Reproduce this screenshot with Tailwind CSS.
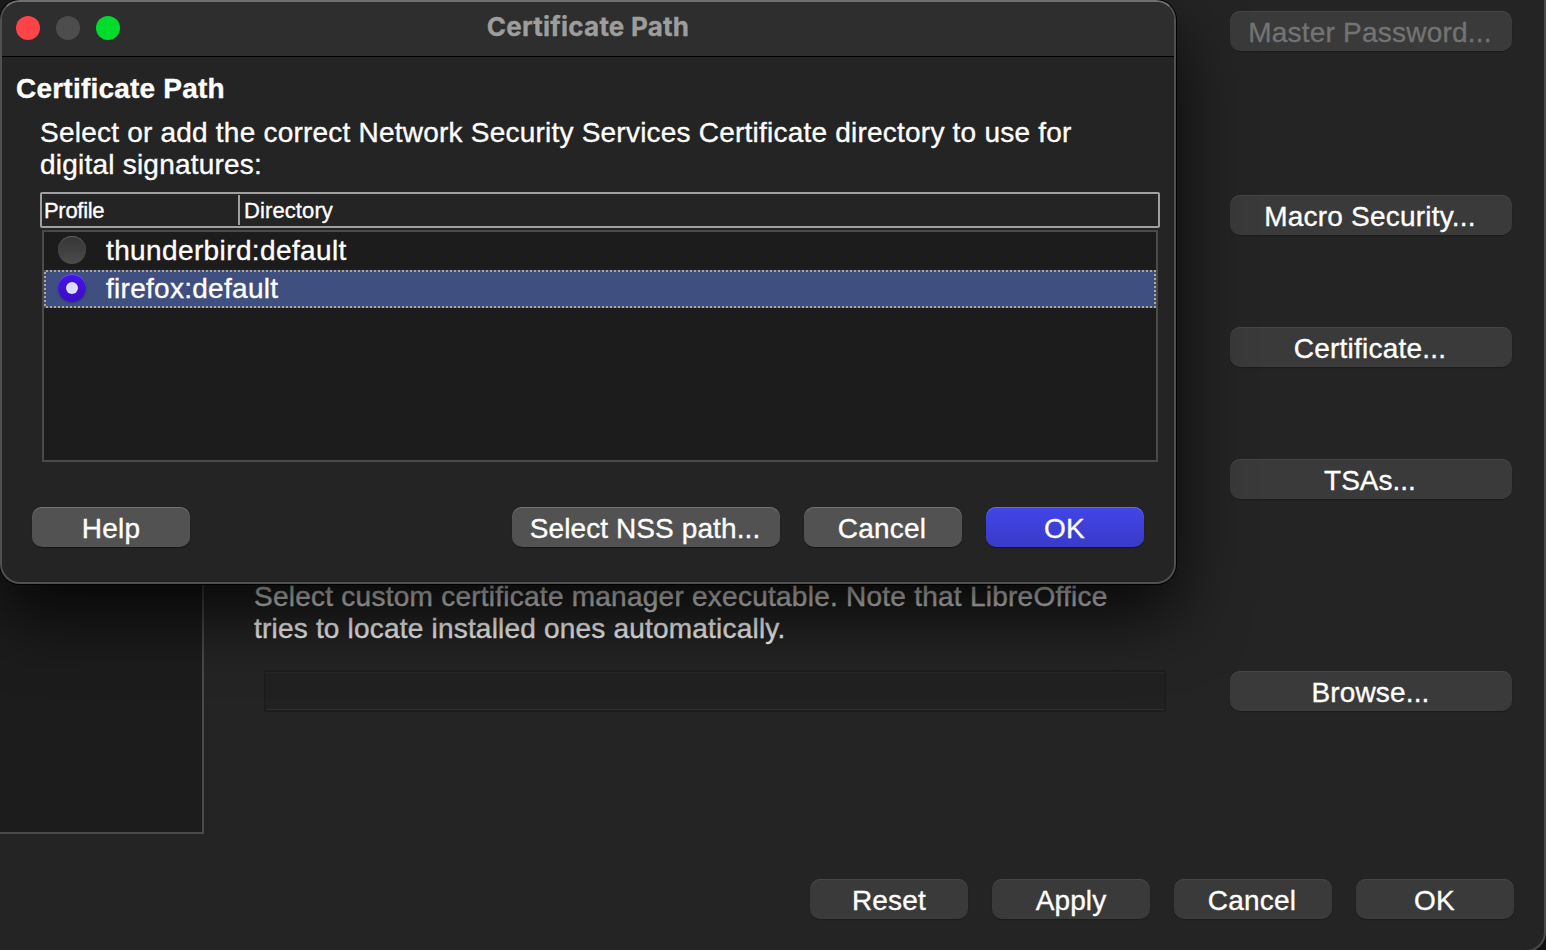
<!DOCTYPE html>
<html lang="en">
<head>
<meta charset="utf-8">
<title>Certificate Path</title>
<script src="https://cdn.jsdelivr.net/npm/@tailwindcss/browser@4"></script>
</head>
<body class="h-[950px] w-[1546px] overflow-hidden bg-[#111111] font-['Liberation_Sans',sans-serif] text-[28px] leading-8 tracking-[0.22px] text-white [-webkit-text-stroke:0.35px] [font-feature-settings:'liga'_1]">
<div class="relative h-[950px] w-[1546px] overflow-hidden">

  <!-- Options window -->
  <main class="flex h-[952px] flex-col rounded-br-[20px] border-r-2 border-b-2 border-[#4a4a4a] bg-[#242424]">
    <div class="flex h-[834px]">
      <aside class="w-[204px] border-r-2 border-b-2 border-[#4a4a4a] bg-[#1c1c1c]"></aside>
      <section class="flex w-[1026px] flex-col pt-[581px] pl-[50px]">
        <p class="whitespace-nowrap tracking-[0.25px]">Select custom certificate manager executable. Note that LibreOffice<br><span class="tracking-[0.2px]">tries to locate installed ones automatically.</span></p>
        <div class="mt-[25px] ml-[10px] h-[42px] w-[902px] border-2 border-[#1d1d1d] bg-[#212121] shadow-[inset_0_-1px_0_#303030,inset_0_1px_0_#262626]"></div>
      </section>
      <section class="flex flex-col pt-[11px]">
        <button class="h-10 w-[282px] rounded-[10px] bg-[#3a3a3a] pt-[3px] pr-[2px] text-[#737373] shadow-[inset_0_1px_0_#464646,0_1px_1px_#1c1c1c]">Master Password...</button>
        <button class="mt-36 h-10 w-[282px] rounded-[10px] bg-[#3a3a3a] pt-[3px] pr-[2px] shadow-[inset_0_1px_0_#464646,0_1px_1px_#1c1c1c]">Macro Security...</button>
        <button class="mt-[92px] h-10 w-[282px] rounded-[10px] bg-[#3a3a3a] pt-[3px] pr-[2px] shadow-[inset_0_1px_0_#464646,0_1px_1px_#1c1c1c]">Certificate...</button>
        <button class="mt-[92px] h-10 w-[282px] rounded-[10px] bg-[#3a3a3a] pt-[3px] pr-[2px] tracking-normal shadow-[inset_0_1px_0_#464646,0_1px_1px_#1c1c1c]">TSAs...</button>
        <button class="mt-[172px] h-10 w-[282px] rounded-[10px] bg-[#3a3a3a] pt-[3px] pr-px tracking-[0.15px] shadow-[inset_0_1px_0_#464646,0_1px_1px_#1c1c1c]">Browse...</button>
      </section>
    </div>
    <footer class="mt-[45px] flex justify-end gap-6 pr-[30px]">
      <button class="h-10 w-[158px] rounded-[10px] bg-[#3a3a3a] pt-[3px] shadow-[inset_0_1px_0_#464646,0_1px_1px_#1c1c1c]">Reset</button>
      <button class="h-10 w-[158px] rounded-[10px] bg-[#3a3a3a] pt-[3px] tracking-[0.1px] shadow-[inset_0_1px_0_#464646,0_1px_1px_#1c1c1c]">Apply</button>
      <button class="h-10 w-[158px] rounded-[10px] bg-[#3a3a3a] pt-[3px] pr-[2px] shadow-[inset_0_1px_0_#464646,0_1px_1px_#1c1c1c]">Cancel</button>
      <button class="h-10 w-[158px] rounded-[10px] bg-[#3a3a3a] pt-[3px] pr-px shadow-[inset_0_1px_0_#464646,0_1px_1px_#1c1c1c]">OK</button>
    </footer>
  </main>

  <!-- Certificate Path dialog -->
  <div class="absolute top-0 left-0 flex h-[584px] w-[1176px] flex-col overflow-hidden rounded-[20px] border-2 border-[#505050] border-t-[#707070] bg-[#242424] shadow-[0_0_0_1px_#000,0_30px_70px_rgba(0,0,0,0.8)]">
    <header class="grid h-[55px] shrink-0 grid-cols-[1fr_auto_1fr] items-center border-b border-black bg-[#2e2e2e] px-[14px] pb-[2px]">
      <div class="flex gap-4">
        <span class="size-6 rounded-full bg-[#ff4346]"></span>
        <span class="size-6 rounded-full bg-[#4d4d4d]"></span>
        <span class="size-6 rounded-full bg-[#00dc2c]"></span>
      </div>
      <h1 class="pb-[2px] font-['Inter',sans-serif] text-[26px] leading-8 font-bold text-[#9d9d9d]">Certificate Path</h1>
    </header>
    <div class="flex flex-col px-[14px] pt-[16px]">
      <h2 class="font-bold">Certificate Path</h2>
      <p class="mt-3 ml-6 whitespace-nowrap">Select or add the correct Network Security Services Certificate directory to use for<br>digital signatures:</p>
      <div class="mt-[11px] ml-6 flex h-9 w-[1120px] items-center rounded-[2px] border-2 border-[#a0a0a0] text-[22px]">
        <span class="flex h-[30px] w-[198px] items-center border-r-2 border-[#a0a0a0] pt-[2px] pl-[2px] tracking-[-0.3px]">Profile</span>
        <span class="pt-[2px] pl-1 tracking-[0.1px]">Directory</span>
      </div>
      <div class="mt-[2px] ml-[26px] h-[232px] w-[1116px] border-2 border-[#4a4a4a] bg-[#1c1c1c]">
        <div class="flex h-[38px] items-center gap-5 pl-[14px]">
          <span class="mb-[2px] size-7 rounded-full bg-linear-to-b from-[#363636] to-[#4b4b4b] shadow-[inset_0_1px_0_#5a5a5a]"></span>
          <span class="tracking-[0.38px]">thunderbird:default</span>
        </div>
        <div class="relative flex h-[38px] items-center gap-5 bg-[#3f5080] pl-[14px]">
          <span class="mb-[2px] flex size-7 items-center justify-center rounded-full bg-linear-to-b from-[#4514e6] to-[#3a0fc4] shadow-[inset_0_1px_0_#6a55e8,0_1px_2px_#2c3a66]"><span class="size-3 rounded-full bg-[#dcdcff]"></span></span>
          <span class="tracking-[0.28px]">firefox:default</span>
          <svg class="absolute inset-0" width="1112" height="38" fill="none" stroke="#b3a58c" stroke-width="2" stroke-dasharray="2 2"><path d="M2 1H1112M2 37H1112M1 2V38M1111 4V36"/></svg>
        </div>
      </div>
      <div class="mt-[45px] flex gap-6 pl-4">
        <button class="mr-auto h-10 w-[158px] rounded-[10px] bg-[#525252] pt-[3px] shadow-[inset_0_1px_0_#727272,0_1px_1px_#161616]">Help</button>
        <button class="h-10 w-[268px] rounded-[10px] bg-[#525252] pt-[3px] pr-[2px] tracking-[0.1px] shadow-[inset_0_1px_0_#727272,0_1px_1px_#161616]">Select NSS path...</button>
        <button class="h-10 w-[158px] rounded-[10px] bg-[#525252] pt-[3px] pr-[2px] shadow-[inset_0_1px_0_#727272,0_1px_1px_#161616]">Cancel</button>
        <button class="mr-4 h-10 w-[158px] rounded-[10px] bg-linear-to-b from-[#4145e8] to-[#3a3bc8] pt-[3px] pr-px shadow-[inset_0_1px_0_#6769ea,0_1px_1px_#161616]">OK</button>
      </div>
    </div>
  </div>
</div>
</body>
</html>
